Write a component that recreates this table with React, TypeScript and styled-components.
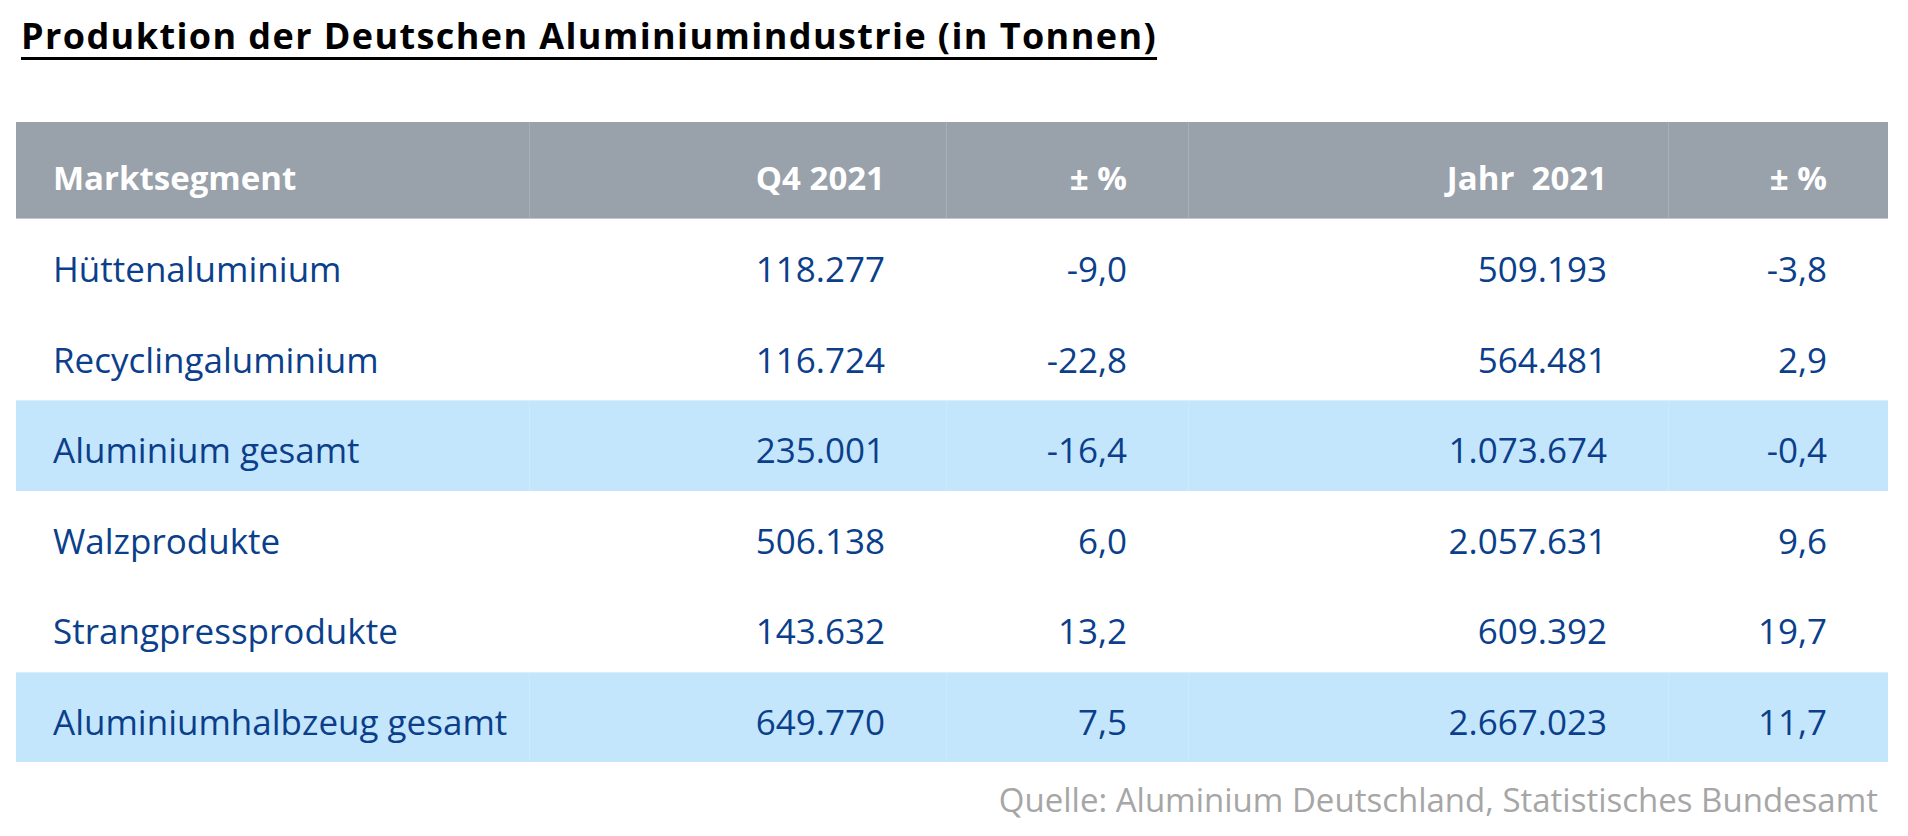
import styled, { createGlobalStyle } from "styled-components"

const GlobalStyle = createGlobalStyle`
  html, body {
    margin: 0;
    padding: 0;
    background: #ffffff;
  }

  body {
    font-family: "Open Sans", "Noto Sans", "Liberation Sans", sans-serif;
  }
`

const Page = styled.div`
  padding: 13px 20px 0 16px;
  width: 1872px;
`

const Title = styled.h1`
  margin: 0 0 0 5px;
  font-size: 36px;
  line-height: 46px;
  font-weight: 700;
  letter-spacing: 1.4px;
  color: #000000;
  text-decoration: underline;
  text-decoration-thickness: 3px;
  text-underline-offset: 8px;
`

const Table = styled.div`
  margin-top: 63px;
  display: flex;
  flex-direction: column;
`

const columns = "513px 417px 242px 480px 220px"

const HeaderRow = styled.div`
  display: grid;
  grid-template-columns: ${columns};
  height: 97px;
  background-color: #99a1ab;
  border-bottom: 1px solid #c3c8ce;
  box-sizing: border-box;
  --divider: #a8afb8;
`

const Row = styled.div<{ $highlight?: boolean }>`
  display: grid;
  grid-template-columns: ${columns};
  height: 90.5px;
  box-sizing: border-box;
  background-color: ${({ $highlight }) => ($highlight ? "#c4e6fc" : "#ffffff")};
  border-top: 1px solid ${({ $highlight }) => ($highlight ? "#d6eefd" : "#ffffff")};
  --divider: ${({ $highlight }) => ($highlight ? "#cdeafc" : "#ffffff")};
`

const HeaderCell = styled.div<{ $left?: boolean }>`
  padding: 33px ${({ $left }) => ($left ? "0 0 37px" : "61px 0 0")};
  text-align: ${({ $left }) => ($left ? "left" : "right")};
  border-left: ${({ $left }) => ($left ? "none" : "1px solid var(--divider)")};
  font-size: 33px;
  line-height: 45px;
  font-weight: 700;
  color: #ffffff;
  white-space: pre;
`

const Cell = styled.div<{ $left?: boolean }>`
  padding: 25px ${({ $left }) => ($left ? "0 0 37px" : "61px 0 0")};
  text-align: ${({ $left }) => ($left ? "left" : "right")};
  border-left: ${({ $left }) => ($left ? "none" : "1px solid var(--divider)")};
  font-size: 35px;
  line-height: 48px;
  color: #0b3f8b;
  white-space: nowrap;
`

const Source = styled.div`
  margin-top: 15px;
  padding-right: 10px;
  text-align: right;
  font-size: 33px;
  line-height: 45px;
  color: #a6a6a6;
`

type RowData = {
  segment: string
  q4: string
  q4Change: string
  year: string
  yearChange: string
  highlight?: boolean
}

const rows: RowData[] = [
  { segment: "Hüttenaluminium", q4: "118.277", q4Change: "-9,0", year: "509.193", yearChange: "-3,8" },
  { segment: "Recyclingaluminium", q4: "116.724", q4Change: "-22,8", year: "564.481", yearChange: "2,9" },
  {
    segment: "Aluminium gesamt",
    q4: "235.001",
    q4Change: "-16,4",
    year: "1.073.674",
    yearChange: "-0,4",
    highlight: true,
  },
  { segment: "Walzprodukte", q4: "506.138", q4Change: "6,0", year: "2.057.631", yearChange: "9,6" },
  { segment: "Strangpressprodukte", q4: "143.632", q4Change: "13,2", year: "609.392", yearChange: "19,7" },
  {
    segment: "Aluminiumhalbzeug gesamt",
    q4: "649.770",
    q4Change: "7,5",
    year: "2.667.023",
    yearChange: "11,7",
    highlight: true,
  },
]

const App = () => {
  return (
    <>
      <GlobalStyle />
      <Page>
        <Title>Produktion der Deutschen Aluminiumindustrie (in Tonnen)</Title>

        <Table>
          <HeaderRow>
            <HeaderCell $left>Marktsegment</HeaderCell>
            <HeaderCell>Q4 2021</HeaderCell>
            <HeaderCell>± %</HeaderCell>
            <HeaderCell>{"Jahr  2021"}</HeaderCell>
            <HeaderCell>± %</HeaderCell>
          </HeaderRow>

          {rows.map((row) => (
            <Row key={row.segment} $highlight={row.highlight}>
              <Cell $left>{row.segment}</Cell>
              <Cell>{row.q4}</Cell>
              <Cell>{row.q4Change}</Cell>
              <Cell>{row.year}</Cell>
              <Cell>{row.yearChange}</Cell>
            </Row>
          ))}
        </Table>

        <Source>Quelle: Aluminium Deutschland, Statistisches Bundesamt</Source>
      </Page>
    </>
  )
}

export default App
